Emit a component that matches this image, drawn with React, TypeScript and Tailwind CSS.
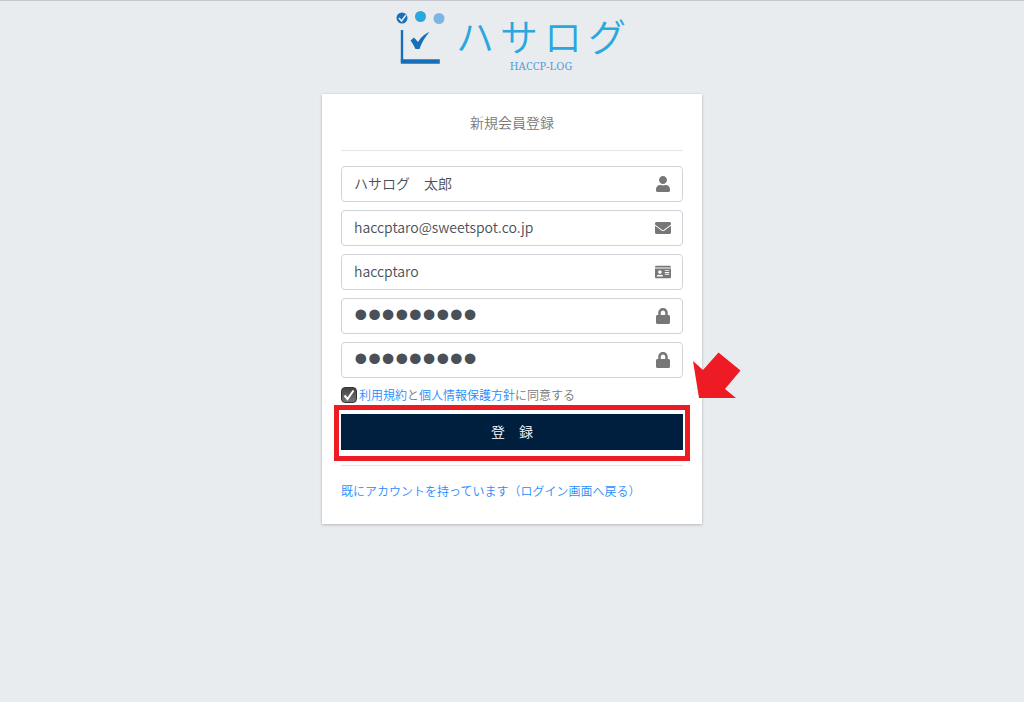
import { useState } from "react";
import { FaEnvelope, FaIdCard, FaLock, FaUser } from "react-icons/fa";
import type { IconType } from "react-icons";
import { twMerge } from "tailwind-merge";

const Logo: React.FC = () => {
  return (
    <div className="flex h-16 w-[234px] items-start text-[#2ba7e0]">
      <svg
        className="h-[54px] w-[50px] shrink-0"
        viewBox="0 0 50 54"
        fill="none"
        aria-hidden="true"
      >
        <circle cx="7" cy="8" r="5.5" fill="#176fb9" />
        <path d="M4 8l2.5 3 4.5-6" stroke="#e9ecef" strokeWidth="1.6" />
        <circle cx="25.5" cy="6.5" r="5.5" fill="#2ba7e0" />
        <circle cx="44" cy="8.5" r="5.5" fill="#7db6e5" />
        <path d="M7 20v32" stroke="#176fb9" strokeWidth="2.4" />
        <path d="M5.8 51.5h39" stroke="#176fb9" strokeWidth="4.4" />
        <path
          d="M15.5 30.5l3.500-3 4 4.500C26 27 30 23.500 34.500 22c-4.500 5-7.500 10-10 17h-4C19 36 17.500 33 15.500 30.500z"
          fill="#176fb9"
        />
      </svg>
      <div className="flex grow flex-col items-center pl-2">
        <span className="flex gap-[6px] text-[38px] leading-[50px] font-[350] whitespace-nowrap">
          <span>ハ</span>
          <span>サ</span>
          <span>ロ</span>
          <span>グ</span>
        </span>
        <span className="font-['Noto_Serif','Liberation_Serif',serif] text-[11px] leading-[12px] font-normal text-[#5b9fd6]">
          HACCP-LOG
        </span>
      </div>
    </div>
  );
};

const Field: React.FC<{
  label: string;
  type: string;
  defaultValue: string;
  icon: IconType;
  className?: string;
}> = ({ label, type, defaultValue, icon: Icon, className }) => {
  return (
    <label className="flex h-9 items-center rounded border border-[#ced4da] bg-white pr-[11px] pl-3">
      <input
        aria-label={label}
        type={type}
        defaultValue={defaultValue}
        className={twMerge(
          "h-full min-w-0 grow bg-transparent pb-[2px] text-[14px] text-[#495057] outline-none",
          className,
        )}
      />
      <Icon className="h-4 w-auto shrink-0 text-[#777]" aria-hidden="true" />
    </label>
  );
};

const Arrow: React.FC = () => {
  return (
    <svg
      className="absolute -top-[62px] left-[351px] h-[47px] w-[49px]"
      viewBox="0 0 49 47"
      aria-hidden="true"
    >
      <path d="M1 9l10 9L26.5 0.5 48.5 18.5 33 37l11 9H7z" fill="#ed1c24" />
    </svg>
  );
};

const App: React.FC = () => {
  const [agreed, setAgreed] = useState(true);

  return (
    <div className="flex min-h-screen flex-col items-center border-t border-[#c4c8cc] bg-[#e9ecef] pt-[9px] font-['Noto_Sans_CJK_JP',sans-serif] font-[350] text-[#777]">
      <Logo />
      <main className="mt-5 w-[380px] max-w-full bg-white px-[19px] pt-[18px] pb-[23px] shadow-[0_0_1px_rgba(0,0,0,0.125),0_1px_3px_rgba(0,0,0,0.2)]">
        <h1 className="text-center text-[14px] leading-5">新規会員登録</h1>
        <hr className="mt-[18px] border-[#e6e7e8]" />
        <form onSubmit={(event) => event.preventDefault()}>
          <div className="mt-[15px] flex flex-col gap-2">
            <Field
              label="氏名"
              type="text"
              defaultValue="ハサログ　太郎"
              icon={FaUser}
            />
            <Field
              label="メールアドレス"
              type="email"
              defaultValue="haccptaro@sweetspot.co.jp"
              icon={FaEnvelope}
            />
            <Field
              label="ユーザーID"
              type="text"
              defaultValue="haccptaro"
              icon={FaIdCard}
            />
            <Field
              label="パスワード"
              type="password"
              defaultValue="haccptaro"
              icon={FaLock}
              className="font-['Liberation_Sans'] text-[39px]"
            />
            <Field
              label="パスワード(確認)"
              type="password"
              defaultValue="haccptaro"
              icon={FaLock}
              className="font-['Liberation_Sans'] text-[39px]"
            />
          </div>
          <div className="mt-[7px] flex h-5 items-center gap-[2px] text-[12px]">
            <span className="relative flex size-4">
              <input
                id="agree"
                type="checkbox"
                checked={agreed}
                onChange={(event) => setAgreed(event.target.checked)}
                className="size-4 appearance-none rounded border border-[#333] bg-linear-to-b from-[#444] to-[#777]"
              />
              {agreed && (
                <svg
                  className="pointer-events-none absolute inset-0 size-4"
                  viewBox="0 0 16 16"
                  fill="none"
                  aria-hidden="true"
                >
                  <path d="M3.5 8.500l3 3.500 6-8.500" stroke="#fff" strokeWidth="2" />
                </svg>
              )}
            </span>
            <label htmlFor="agree">
              <a href="#terms" className="text-[#1f8cff]">
                利用規約
              </a>
              と
              <a href="#privacy" className="text-[#1f8cff]">
                個人情報保護方針
              </a>
              に同意する
            </label>
          </div>
          <div className="relative mt-[9px]">
            <button
              type="submit"
              className="h-9 w-full bg-[#001f3f] pb-[2px] text-[14px] text-white"
            >
              登　録
            </button>
            <div className="pointer-events-none absolute -inset-x-[7px] -top-[9px] -bottom-[11px] border-5 border-[#ed1c24]" />
            <Arrow />
          </div>
        </form>
        <hr className="mt-[15px] border-[#e6e7e8]" />
        <p className="mt-[15px] text-[12px] leading-5">
          <a href="#login" className="text-[#1f8cff]">
            既にアカウントを持っています（ログイン画面へ戻る）
          </a>
        </p>
      </main>
    </div>
  );
};

export default App;
